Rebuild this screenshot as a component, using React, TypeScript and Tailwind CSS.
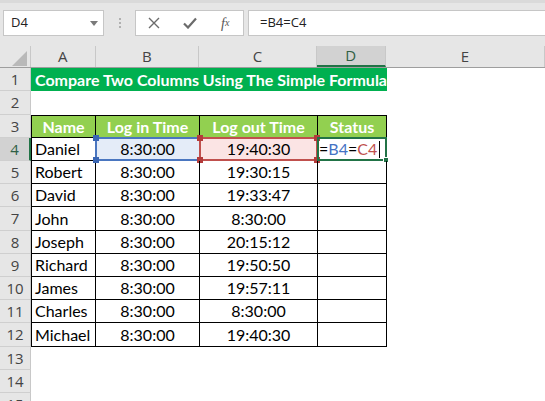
import React from 'react';

const COLS = ['A', 'B', 'C', 'D', 'E'];
const COL_W = ['w-[65px]', 'w-[104px]', 'w-[118px]', 'w-[69px]', 'w-[160px]'];
const ROW_H = ['h-[23px]', 'h-[24px]', 'h-[23px]', 'h-[23px]', 'h-[23px]', 'h-[23px]', 'h-[24px]', 'h-[23px]', 'h-[23px]', 'h-[23px]', 'h-[23px]', 'h-[24px]', 'h-[23px]', 'h-[23px]', 'h-[23px]'];

const people: [string, string, string][] = [
  ['Daniel', '8:30:00', '19:40:30'],
  ['Robert', '8:30:00', '19:30:15'],
  ['David', '8:30:00', '19:33:47'],
  ['John', '8:30:00', '8:30:00'],
  ['Joseph', '8:30:00', '20:15:12'],
  ['Richard', '8:30:00', '19:50:50'],
  ['James', '8:30:00', '19:57:11'],
  ['Charles', '8:30:00', '8:30:00'],
  ['Michael', '8:30:00', '19:40:30'],
];

const cellFont = { fontFamily: 'Lato, "Liberation Sans", sans-serif' };
const uiFont = { fontFamily: '"Open Sans", "Liberation Sans", sans-serif' };

function Handle({ className }: { className: string }) {
  return <div className={`absolute w-[6px] h-[6px] ${className}`} />;
}

function FormulaBar() {
  return (
    <div className="h-[46px] bg-[#e6e6e6] border-t-[3px] border-[#dadada] flex items-start pt-[7px] pl-[3px]" style={uiFont}>
      <div className="w-[101px] h-[26px] bg-white border border-[#c6c6c6] flex items-center justify-between pl-[7px] pr-[5px] text-[13px] text-[#222]">
        <span>D4</span>
        <svg width="8" height="5" viewBox="0 0 8 5"><path d="M0 0h8L4 5z" fill="#7a7a7a" /></svg>
      </div>
      <div className="w-[31px] h-[26px] flex flex-col items-center justify-center gap-[2px]">
        <div className="w-[2px] h-[2px] bg-[#b0b0b0]" />
        <div className="w-[2px] h-[2px] bg-[#b0b0b0]" />
        <div className="w-[2px] h-[2px] bg-[#b0b0b0]" />
      </div>
      <div className="w-[109px] h-[26px] bg-white border border-[#c6c6c6] flex items-center">
        <div className="w-[36px] flex justify-center">
          <svg width="12" height="12" viewBox="0 0 12 12"><path d="M1 1l10 10M11 1L1 11" stroke="#6b6b6b" strokeWidth="1.4" /></svg>
        </div>
        <div className="w-[36px] flex justify-center">
          <svg width="14" height="12" viewBox="0 0 14 12"><path d="M1 6.5l4 4L13 1.5" stroke="#6b6b6b" strokeWidth="2.2" fill="none" /></svg>
        </div>
        <div className="w-[36px] flex justify-center text-[14px] italic text-[#555]" style={{ fontFamily: '"Liberation Serif", serif' }}>
          f<span className="text-[10px] relative top-[2px]">x</span>
        </div>
      </div>
      <div className="flex-1 h-[26px] bg-white border border-[#c6c6c6] border-r-0 ml-[4px] flex items-center pl-[11px] text-[13px] text-[#222]">
        =B4=C4
      </div>
    </div>
  );
}

function ColumnHeaders() {
  return (
    <div className="flex h-[22px] bg-[#e6e6e6] border-b border-[#9e9e9e]" style={uiFont}>
      <div className="w-[31px] h-full relative border-r border-[#c8c8c8]">
        <svg className="absolute left-[12px] top-[5px]" width="15" height="15" viewBox="0 0 15 15"><path d="M15 0V15H0z" fill="#b9b9b9" /></svg>
      </div>
      {COLS.map((c, i) => (
        <div
          key={c}
          className={`${COL_W[i]} h-full flex items-center justify-center text-[15px] border-r border-[#c8c8c8] ${c === 'D' ? 'bg-[#d2d2d2] text-[#2f5f45] border-b-2 border-b-[#217346]' : 'text-[#444]'}`}
        >
          {c}
        </div>
      ))}
    </div>
  );
}

function RowHeader({ n }: { n: number }) {
  const sel = n === 4;
  return (
    <div
      className={`w-[31px] shrink-0 h-full flex items-center justify-center text-[15px] border-b border-[#cfcfcf] ${sel ? 'bg-[#d2d2d2] text-[#2f5f45] border-r-2 border-r-[#217346]' : 'bg-[#e6e6e6] text-[#444] border-r border-r-[#c8c8c8]'}`}
      style={uiFont}
    >
      {n}
    </div>
  );
}

export default function App() {
  return (
    <div className="w-[545px] h-[401px] overflow-hidden bg-white select-none">
      <FormulaBar />
      <ColumnHeaders />
      <div style={cellFont} className="text-[16px] text-black">
        {ROW_H.map((h, r) => {
          const n = r + 1;
          const tableRow = n >= 3 && n <= 12;
          return (
            <div key={n} className={`flex ${h}`}>
              <RowHeader n={n} />
              {n === 1 && (
                <div className="w-[356px] h-full bg-[#00b050] text-white font-bold flex items-center pl-[4px] whitespace-nowrap overflow-visible">
                  Compare Two Columns Using The Simple Formula
                </div>
              )}
              {n === 3 &&
                ['Name', 'Log in Time', 'Log out Time', 'Status'].map((t, i) => (
                  <div
                    key={t}
                    className={`${COL_W[i]} h-full bg-[#92d050] text-white font-bold flex items-center justify-center border-t border-r border-b border-black ${i === 0 ? 'border-l' : ''}`}
                  >
                    {t}
                  </div>
                ))}
              {tableRow && n > 3 && (() => {
                const p = people[n - 4];
                return (
                  <>
                    <div className="w-[65px] h-full flex items-center pl-[3px] border-l border-r border-b border-black">{p[0]}</div>
                    <div className={`w-[104px] h-full flex items-center justify-center border-r border-b border-black relative ${n === 4 ? 'bg-[#e4ecf8]' : ''}`}>
                      {p[1]}
                      {n === 4 && (
                        <div className="absolute -left-[1px] -top-[1px] w-[106px] h-[24px] border-2 border-[#4a76c0]">
                          <Handle className="-left-[4px] -top-[4px] bg-[#3a66b4]" />
                          <Handle className="-right-[4px] -top-[4px] bg-[#3a66b4]" />
                          <Handle className="-left-[4px] -bottom-[4px] bg-[#3a66b4]" />
                          <Handle className="-right-[4px] -bottom-[4px] bg-[#3a66b4]" />
                        </div>
                      )}
                    </div>
                    <div className={`w-[118px] h-full flex items-center justify-center border-r border-b border-black relative ${n === 4 ? 'bg-[#fbe4e4]' : ''}`}>
                      {p[2]}
                      {n === 4 && (
                        <div className="absolute -left-[1px] -top-[1px] w-[119px] h-[24px] border-2 border-[#c0504d]">
                          <Handle className="-left-[4px] -top-[4px] bg-[#b33b3b]" />
                          <Handle className="-right-[4px] -top-[4px] bg-[#b33b3b]" />
                          <Handle className="-left-[4px] -bottom-[4px] bg-[#b33b3b]" />
                          <Handle className="-right-[4px] -bottom-[4px] bg-[#b33b3b]" />
                        </div>
                      )}
                    </div>
                    <div className="w-[69px] h-full flex items-center pl-[1px] border-r border-b border-black relative">
                      {n === 4 && (
                        <>
                          <span>=</span>
                          <span className="text-[#4472c4]">B4</span>
                          <span>=</span>
                          <span className="text-[#c0504d]">C4</span>
                          <span className="w-[1px] h-[17px] bg-black ml-[2px]" />
                          <div className="absolute -left-[1px] -top-[1px] w-[70px] h-[24px] border-2 border-[#217346]">
                            <Handle className="-right-[4px] -bottom-[4px] bg-[#217346] border border-white" />
                          </div>
                        </>
                      )}
                    </div>
                  </>
                );
              })()}
            </div>
          );
        })}
      </div>
    </div>
  );
}
